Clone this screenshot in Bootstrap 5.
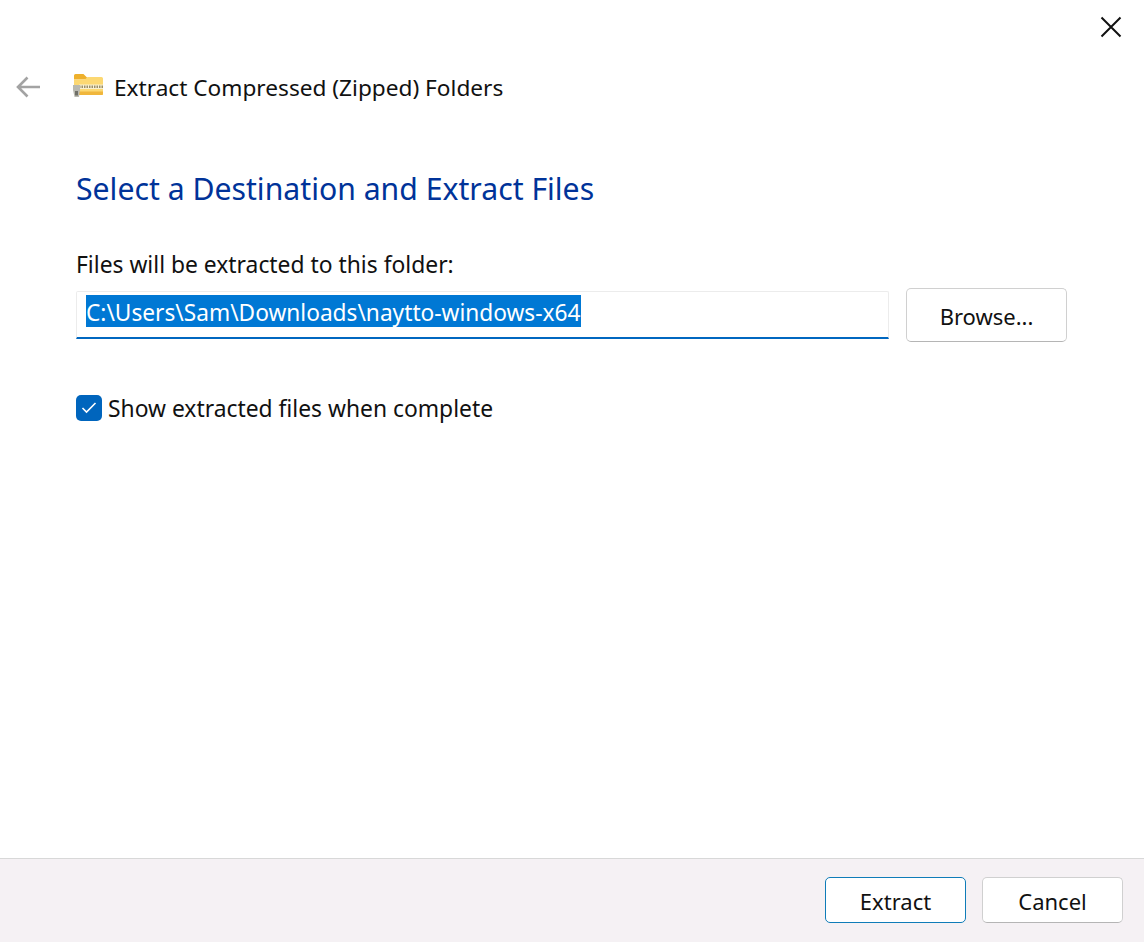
<!DOCTYPE html>
<html lang="en">
<head>
<meta charset="utf-8">
<title>Extract Compressed (Zipped) Folders</title>
<link href="https://cdn.jsdelivr.net/npm/bootstrap@5.3.0/dist/css/bootstrap.min.css" rel="stylesheet">
<style>
html,body{height:100%;margin:0;}
body{font-family:"Noto Sans","Open Sans",sans-serif;color:#111;background:#fff;font-size:23px;line-height:32px;overflow:hidden;}
.dlg{height:942px;width:1144px;}
.close-row{height:70px;padding:16px 22px 0 0;}
.close-btn,.back-btn{background:none;border:0;padding:0;line-height:0;}
.title-row{height:36px;margin-top:-1px;padding-left:16px;}
.back-btn{width:24px;margin-right:33px;}
.folder-ic{margin-right:11px;margin-top:-3px;}
.dlg-title{font-size:22.65px;padding-top:1px;}
.main-area{padding:0 77px 0 76px;}
.head-line{color:#003399;font-size:30.2px;line-height:40px;margin:64px 0 0;font-weight:400;}
.path-label{margin:40px 0 0;font-size:22.85px;height:32px;}
.path-row{margin-top:7px;gap:17px;}
.path-box{width:813px;height:48px;margin-top:3px;border:1px solid #ececec;border-bottom:2px solid #0067c0;padding:3px 9px 0;font-size:22.7px;line-height:36px;border-radius:2px 2px 0 0;white-space:nowrap;}
.path-sel{background:#0078d4;color:#fff;display:inline-block;height:32px;vertical-align:top;}
.win-btn{background:#fff;border:1px solid #d0d0d0;border-bottom-color:#b5b5b5;border-radius:5px;color:#111;font-size:22px;line-height:30px;padding:2px 0 0;}
.win-btn:hover{background:#fff;}
.browse-btn{width:161px;height:54px;}
.check-row{margin-top:50px;gap:6px;font-size:22.85px;}
.check-box{width:26px;height:26px;background:#0065bd;border-radius:5px;margin-top:-2px;}
.check-text{padding-top:1px;}
.foot-bar{height:84px;background:#f5f1f4;border-top:1px solid #d8d8d8;padding:18px 21px 0 0;gap:16px;}
.foot-btn{width:141px;height:46px;}
.primary-btn{border-color:#0f7cb8;}
</style>
</head>
<body>
<div class="dlg d-flex flex-column">
  <div class="close-row d-flex justify-content-end align-items-start">
    <button class="close-btn" type="button" aria-label="Close">
      <svg width="22" height="22" viewBox="0 0 22 22"><path d="M1.5 1.5 20.5 20.5M20.5 1.5 1.5 20.5" stroke="#111" stroke-width="2" fill="none"/></svg>
    </button>
  </div>
  <div class="title-row d-flex align-items-center">
    <button class="back-btn" type="button" aria-label="Back">
      <svg width="25" height="22" viewBox="0 0 25 22"><path d="M24 11H2M11.5 1.5 2 11l9.5 9.5" stroke="#a3a3a3" stroke-width="2.6" fill="none"/></svg>
    </button>
    <svg class="folder-ic" width="30" height="23" viewBox="0 0 30 23">
      <path d="M1 1.500A1.500 1.500 0 0 1 2.500 0h8l3.500 3.500 1 2H1z" fill="#eeb02c"/>
      <path d="M1 5.500 12 5.500 14.500 3h14A1.500 1.500 0 0 1 30 4.500V20a1 1 0 0 1-1 1H2a1 1 0 0 1-1-1z" fill="#fcd872"/>
      <path d="M1 17.500h29V20a1 1 0 0 1-1 1H2a1 1 0 0 1-1-1z" fill="#f0b63c"/>
      <path d="M6 10.500h24V15H6z" fill="#f8f0cf"/>
      <path d="M6 12.700h24" stroke="#9c8f68" stroke-width="2.400" stroke-dasharray="1.500 1"/>
      <path d="M0 11h7v5l-1 7H1.500L0 16z" fill="#b9b9b0"/>
      <path d="M2 17h3v4.500H2z" fill="#6f6f68"/>
    </svg>
    <span class="dlg-title">Extract Compressed (Zipped) Folders</span>
  </div>
  <div class="main-area flex-grow-1">
    <h1 class="head-line">Select a Destination and Extract Files</h1>
    <p class="path-label">Files will be extracted to this folder:</p>
    <div class="path-row d-flex">
      <div class="path-box"><span class="path-sel">C:\Users\Sam\Downloads\naytto-windows-x64</span></div>
      <button class="btn win-btn browse-btn" type="button">Browse...</button>
    </div>
    <div class="check-row d-flex align-items-center">
      <span class="check-box d-flex align-items-center justify-content-center">
        <svg width="16" height="13" viewBox="0 0 16 13"><path d="M1.500 7 5.500 11 14.500 2" stroke="#fff" stroke-width="1.600" fill="none"/></svg>
      </span>
      <span class="check-text">Show extracted files when complete</span>
    </div>
  </div>
  <div class="foot-bar d-flex justify-content-end">
    <button class="btn win-btn foot-btn primary-btn" type="button">Extract</button>
    <button class="btn win-btn foot-btn" type="button">Cancel</button>
  </div>
</div>
</body>
</html>
